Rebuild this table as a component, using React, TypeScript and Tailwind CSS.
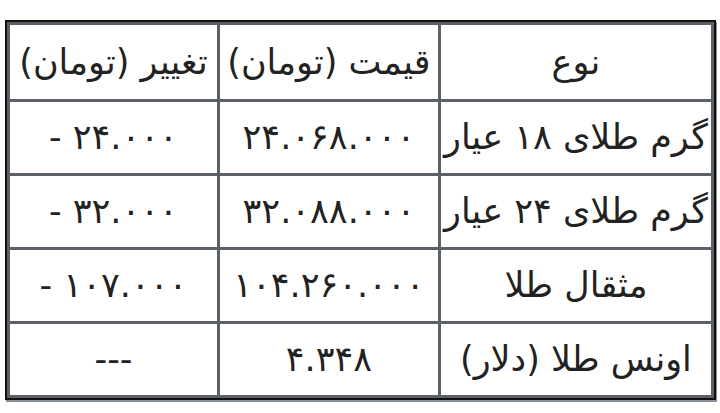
import React from "react";

const rows: [string, string, string][] = [
  ["گرم طلای ۱۸ عیار", "۲۴.۰۶۸.۰۰۰", "- ۲۴.۰۰۰"],
  ["گرم طلای ۲۴ عیار", "۳۲.۰۸۸.۰۰۰", "- ۳۲.۰۰۰"],
  ["مثقال طلا", "۱۰۴.۲۶۰.۰۰۰", "- ۱۰۷.۰۰۰"],
  ["اونس طلا (دلار)", "۴.۳۴۸", "---"],
];

export default function App() {
  const cell = "border-[3px] border-[#5c6168] text-center align-middle px-0 whitespace-nowrap";
  return (
    <div className="min-h-[413px] w-[720px] bg-white pt-[20px] pl-[5px]">
      <div
        dir="rtl"
        className="w-[711px] border-[2px] border-[#111] bg-white text-[#222] text-[35px] leading-none shadow-[1px_2px_0_#8a9098]"
        style={{ fontFamily: '"DejaVu Sans", "Noto Sans", sans-serif' }}
      >
        <table className="w-full border-collapse table-fixed">
          <colgroup>
            <col className="w-[272px]" />
            <col className="w-[220px]" />
            <col className="w-[209px]" />
          </colgroup>
          <thead>
            <tr className="h-[77px]">
              <th className={cell + " font-normal"}>نوع</th>
              <th className={cell + " font-normal"}>قیمت (تومان)</th>
              <th className={cell + " font-normal"}>تغییر (تومان)</th>
            </tr>
          </thead>
          <tbody>
            {rows.map((r, i) => (
              <tr key={i} className="h-[74px]">
                <td className={cell}>{r[0]}</td>
                <td className={cell}>
                  <span dir="ltr">{r[1]}</span>
                </td>
                <td className={cell}>
                  <span dir="ltr">{r[2]}</span>
                </td>
              </tr>
            ))}
          </tbody>
        </table>
      </div>
    </div>
  );
}
